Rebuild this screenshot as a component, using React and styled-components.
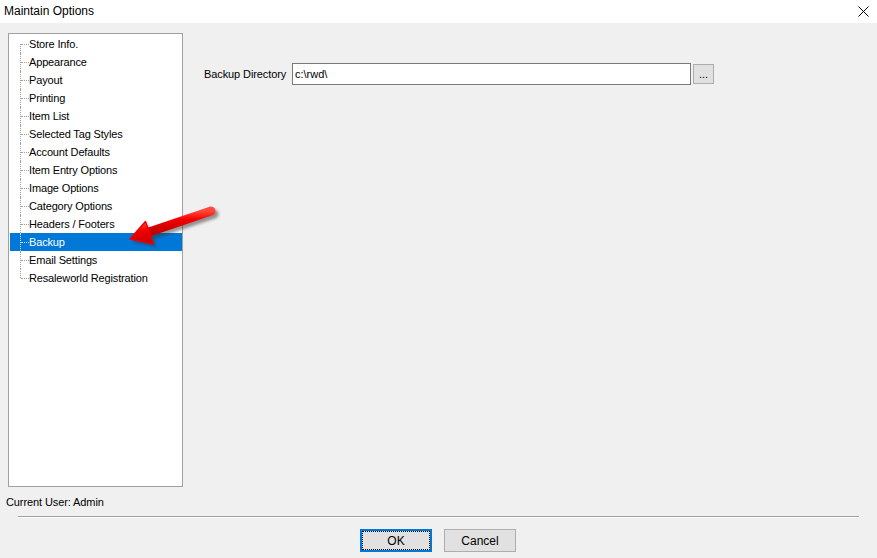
import React from "react";
import styled, { createGlobalStyle } from "styled-components";

const Global = createGlobalStyle`
  html, body { margin: 0; padding: 0; background: #f0f0f0; }
  body { font-family: "Liberation Sans", Arial, sans-serif; font-size: 11px; color: #000; }
  * { box-sizing: border-box; }
`;

const Window = styled.div`
  position: relative;
  width: 877px;
  height: 558px;
  background: #f0f0f0;
  display: flex;
  flex-direction: column;
  overflow: hidden;
`;

const TitleBar = styled.div`
  height: 23px;
  background: #fff;
  display: flex;
  align-items: center;
  justify-content: space-between;
  padding: 0 8px 2px 4px;
`;

const Title = styled.span`
  font-size: 12px;
  color: #000;
`;

const CloseButton = styled.span`
  display: flex;
  width: 11px;
  height: 11px;
  margin-top: 1px;
`;

const Body = styled.div`
  display: flex;
  padding: 10px 0 0 8px;
`;

const Tree = styled.div`
  width: 175px;
  height: 454px;
  background: #fff;
  border: 1px solid #a0a0a0;
  padding: 1px 0 0 1px;
  display: flex;
  flex-direction: column;
`;

const Row = styled.div`
  height: 18px;
  display: flex;
  align-items: center;
  background: ${(p) => (p.$selected ? "#0078d7" : "transparent")};
  color: ${(p) => (p.$selected ? "#fff" : "#000")};
`;

const Connector = styled.span`
  position: relative;
  width: 9px;
  height: 18px;
  margin-left: 10px;
  flex: none;
  &::before {
    content: "";
    position: absolute;
    left: 0;
    top: ${(p) => (p.$first ? "9px" : "0")};
    bottom: ${(p) => (p.$last ? "9px" : "0")};
    border-left: 1px dotted ${(p) => (p.$selected ? "#cfe3f5" : "#a0a0a0")};
  }
  &::after {
    content: "";
    position: absolute;
    left: 1px;
    right: 0;
    top: 9px;
    border-top: 1px dotted ${(p) => (p.$selected ? "#cfe3f5" : "#a0a0a0")};
  }
`;

const Label = styled.span`
  white-space: nowrap;
  letter-spacing: -0.15px;
`;

const Pane = styled.div`
  padding: 30px 0 0 21px;
`;

const FieldRow = styled.div`
  display: flex;
  align-items: center;
`;

const FieldLabel = styled.span`
  width: 88px;
  letter-spacing: -0.1px;
`;

const TextBox = styled.div`
  width: 399px;
  height: 22px;
  background: #fff;
  border: 1px solid #7a7a7a;
  padding-left: 2px;
  display: flex;
  align-items: center;
`;

const BrowseButton = styled.div`
  width: 21px;
  height: 20px;
  margin-left: 2px;
  background: #e1e1e1;
  border: 1px solid #adadad;
  display: flex;
  align-items: flex-end;
  justify-content: center;
  padding-bottom: 3px;
  line-height: 1;
`;

const Status = styled.div`
  padding: 9px 0 0 6px;
  height: 29px;
  line-height: 13px;
  letter-spacing: -0.1px;
`;

const Separator = styled.div`
  margin: 0 18px 0 18px;
  height: 2px;
  border-top: 1px solid #a0a0a0;
  border-bottom: 1px solid #fff;
`;

const Buttons = styled.div`
  display: flex;
  justify-content: center;
  gap: 12px;
  padding: 11px 1px 0 0;
`;

const Button = styled.div`
  width: 72px;
  height: 23px;
  background: #e1e1e1;
  border: ${(p) => (p.$default ? "2px solid #0078d7" : "1px solid #adadad")};
  padding: ${(p) => (p.$default ? "1px" : "2px")};
  display: flex;
`;

const ButtonFace = styled.span`
  flex: 1;
  display: flex;
  align-items: center;
  justify-content: center;
  outline: ${(p) => (p.$focus ? "1px dotted #000" : "none")};
  font-size: 12px;
`;

const Overlay = styled.svg`
  position: absolute;
  left: 120px;
  top: 198px;
  pointer-events: none;
`;

const items = [
  "Store Info.",
  "Appearance",
  "Payout",
  "Printing",
  "Item List",
  "Selected Tag Styles",
  "Account Defaults",
  "Item Entry Options",
  "Image Options",
  "Category Options",
  "Headers / Footers",
  "Backup",
  "Email Settings",
  "Resaleworld Registration",
];

function PointerArrow() {
  // red callout arrow pointing at the selected node, with a soft drop shadow
  return (
    <Overlay width="110" height="56" viewBox="0 0 110 56">
      <defs>
        <linearGradient id="redFill" x1="0" y1="0" x2="0" y2="1">
          <stop offset="0" stopColor="#ff4a3a" />
          <stop offset="0.4" stopColor="#f50000" />
          <stop offset="1" stopColor="#c00000" />
        </linearGradient>
        <filter id="shade" x="-20%" y="-40%" width="150%" height="200%">
          <feGaussianBlur stdDeviation="1.6" />
        </filter>
      </defs>
      <g transform="translate(3 3)" opacity="0.5" filter="url(#shade)">
        <line x1="91" y1="13" x2="32" y2="33" stroke="#333" strokeWidth="9" strokeLinecap="round" />
        <polygon points="10,41 25.5,23.5 33.5,46" fill="#333" />
      </g>
      <line x1="91" y1="13" x2="29" y2="34" stroke="url(#redFill)" strokeWidth="9" strokeLinecap="round" />
      <polygon points="10,41 25.5,23.5 33.5,46" fill="url(#redFill)" strokeLinejoin="round" stroke="#ee0000" strokeWidth="1.5" />
    </Overlay>
  );
}

export default function App() {
  return (
    <>
      <Global />
      <Window>
        <TitleBar>
          <Title>Maintain Options</Title>
          <CloseButton>
            <svg width="11" height="11" viewBox="0 0 11 11">
              <path d="M0.5 0.5 L10.5 10.5 M10.5 0.5 L0.5 10.5" stroke="#000" strokeWidth="1" />
            </svg>
          </CloseButton>
        </TitleBar>
        <Body>
          <Tree>
            {items.map((name, i) => {
              const sel = name === "Backup";
              return (
                <Row key={name} $selected={sel}>
                  <Connector $first={i === 0} $last={i === items.length - 1} $selected={sel} />
                  <Label>{name}</Label>
                </Row>
              );
            })}
          </Tree>
          <Pane>
            <FieldRow>
              <FieldLabel>Backup Directory</FieldLabel>
              <TextBox>c:\rwd\</TextBox>
              <BrowseButton>...</BrowseButton>
            </FieldRow>
          </Pane>
        </Body>
        <Status>Current User: Admin</Status>
        <Separator />
        <Buttons>
          <Button $default>
            <ButtonFace $focus>OK</ButtonFace>
          </Button>
          <Button>
            <ButtonFace>Cancel</ButtonFace>
          </Button>
        </Buttons>
        <PointerArrow />
      </Window>
    </>
  );
}
